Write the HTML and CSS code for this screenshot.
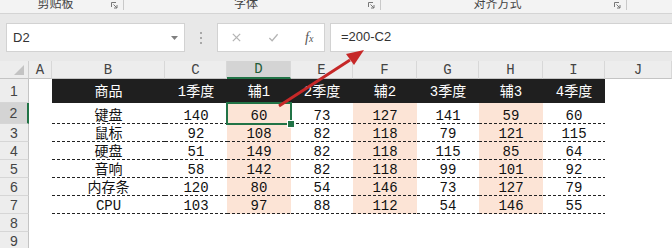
FILE: index.html
```html
<!DOCTYPE html>
<html lang="zh-CN">
<head>
    <meta charset="UTF-8">
    <title>辅助列 - Excel</title>
    <link rel="stylesheet" href="styles.css">
</head>
<body>
    <div class="ribbon">
        <div class="group g-clip"><span class="group-label">剪贴板</span><span class="launcher"><svg viewBox="0 0 7 7"><path d="M0.5 5V0.5H5M2.5 2.5l3.5 3.5M6 3v3H3"/></svg></span></div>
        <div class="group g-font"><span class="group-label">字体</span><span class="launcher"><svg viewBox="0 0 7 7"><path d="M0.5 5V0.5H5M2.5 2.5l3.5 3.5M6 3v3H3"/></svg></span></div>
        <div class="group g-align"><span class="group-label">对齐方式</span><span class="launcher"><svg viewBox="0 0 7 7"><path d="M0.5 5V0.5H5M2.5 2.5l3.5 3.5M6 3v3H3"/></svg></span></div>
    </div>

    <div class="formula-bar">
        <div class="name-box">
            <span>D2</span>
            <svg class="caret" viewBox="0 0 7 4"><path d="M0 0h7L3.5 4z"/></svg>
        </div>
        <div class="grip"><i></i><i></i><i></i></div>
        <div class="fn-buttons">
            <svg class="btn-icon" viewBox="0 0 12 12"><path d="M2 2l8 8M10 2l-8 8"/></svg>
            <svg class="btn-icon" viewBox="0 0 12 12"><path d="M1.5 6.5l3 3 6-7"/></svg>
            <span class="fx">f<small>x</small></span>
        </div>
        <div class="formula-input">=200-C2</div>
    </div>

    <div class="sheet">
        <div class="row head">
            <div class="corner"><svg viewBox="0 0 10 10"><path d="M10 0v10H0z"/></svg></div>
            <div class="ch">A</div><div class="ch">B</div><div class="ch">C</div><div class="ch sel">D</div><div class="ch">E</div>
            <div class="ch">F</div><div class="ch">G</div><div class="ch">H</div><div class="ch">I</div><div class="ch">J</div>
        </div>
        <div class="row r-title">
            <div class="rh">1</div><div class="cell"></div>
            <div class="cell title">商品</div><div class="cell title">1季度</div><div class="cell title">辅1</div><div class="cell title">2季度</div>
            <div class="cell title">辅2</div><div class="cell title">3季度</div><div class="cell title">辅3</div><div class="cell title">4季度</div>
            <div class="cell"></div>
        </div>
        <div class="row r-first">
            <div class="rh sel">2</div><div class="cell"></div>
            <div class="cell data">键盘</div><div class="cell data">140</div><div class="cell data aux active">60</div><div class="cell data">73</div>
            <div class="cell data aux">127</div><div class="cell data">141</div><div class="cell data aux">59</div><div class="cell data">60</div>
            <div class="cell"></div>
        </div>
        <div class="row">
            <div class="rh">3</div><div class="cell"></div>
            <div class="cell data">鼠标</div><div class="cell data">92</div><div class="cell data aux">108</div><div class="cell data">82</div>
            <div class="cell data aux">118</div><div class="cell data">79</div><div class="cell data aux">121</div><div class="cell data">115</div>
            <div class="cell"></div>
        </div>
        <div class="row">
            <div class="rh">4</div><div class="cell"></div>
            <div class="cell data">硬盘</div><div class="cell data">51</div><div class="cell data aux">149</div><div class="cell data">82</div>
            <div class="cell data aux">118</div><div class="cell data">115</div><div class="cell data aux">85</div><div class="cell data">64</div>
            <div class="cell"></div>
        </div>
        <div class="row">
            <div class="rh">5</div><div class="cell"></div>
            <div class="cell data">音响</div><div class="cell data">58</div><div class="cell data aux">142</div><div class="cell data">82</div>
            <div class="cell data aux">118</div><div class="cell data">99</div><div class="cell data aux">101</div><div class="cell data">92</div>
            <div class="cell"></div>
        </div>
        <div class="row">
            <div class="rh">6</div><div class="cell"></div>
            <div class="cell data">内存条</div><div class="cell data">120</div><div class="cell data aux">80</div><div class="cell data">54</div>
            <div class="cell data aux">146</div><div class="cell data">73</div><div class="cell data aux">127</div><div class="cell data">79</div>
            <div class="cell"></div>
        </div>
        <div class="row">
            <div class="rh">7</div><div class="cell"></div>
            <div class="cell data">CPU</div><div class="cell data">103</div><div class="cell data aux">97</div><div class="cell data">88</div>
            <div class="cell data aux">112</div><div class="cell data">54</div><div class="cell data aux">146</div><div class="cell data">55</div>
            <div class="cell"></div>
        </div>
        <div class="row">
            <div class="rh">8</div>
        </div>
        <div class="row">
            <div class="rh">9</div>
        </div>
    </div>

    <!-- 红色箭头：从 D2 指向编辑栏 -->
    <svg class="arrow" viewBox="0 0 672 248">
        <path class="arrow-line" d="M279 106L350 60"/>
        <path class="arrow-head" d="M364 50L354 65L346 54z"/>
    </svg>
</body>
</html>
```

FILE: styles.css
```css
* {
    margin: 0;
    padding: 0;
    box-sizing: border-box;
}

body {
    width: 672px;
    height: 248px;
    overflow: hidden;
    position: relative;
    background: #e8e8e8;
    font-family: "Liberation Sans", "Noto Sans CJK SC", sans-serif;
    color: #222;
}

/* 功能区底部 */
.ribbon {
    display: flex;
    height: 14px;
    background: #f3f3f3;
    border-bottom: 1px solid #d4d4d4;
    overflow: hidden;
}

.group {
    display: flex;
    align-items: flex-start;
    height: 10px;
    border-right: 1px solid #c9c9c9;
}

.g-clip { width: 124px; }
.g-font { width: 257px; }
.g-align { width: 246px; }

.group-label {
    flex: 1;
    text-align: center;
    font-family: "Noto Sans CJK SC", sans-serif;
    font-size: 12px;
    line-height: 12px;
    margin-top: -3px;
    color: #444;
}

.launcher {
    width: 7px;
    height: 7px;
    margin: 2px 5px 0 0;
}

.launcher svg {
    display: block;
    width: 7px;
    height: 7px;
    fill: none;
    stroke: #777;
    stroke-width: 1;
}

/* 编辑栏 */
.formula-bar {
    display: flex;
    align-items: stretch;
    height: 47px;
    padding: 9px 0 8px;
}

.name-box,
.fn-buttons,
.formula-input {
    background: #fff;
    border: 1px solid #d2d2d2;
    height: 29px;
}

.name-box {
    display: flex;
    align-items: center;
    justify-content: space-between;
    width: 179px;
    margin-left: 6px;
    padding: 0 6px 0 6px;
    font-size: 13px;
    color: #333;
}

.caret {
    width: 7px;
    height: 4px;
    fill: #808080;
}

.grip {
    display: flex;
    flex-direction: column;
    justify-content: center;
    gap: 3px;
    width: 32px;
    align-items: center;
}

.grip i {
    display: block;
    width: 2px;
    height: 2px;
    background: #a8a8a8;
}

.fn-buttons {
    display: flex;
    align-items: center;
    width: 108px;
    padding-left: 13px;
    gap: 26px;
}

.btn-icon {
    width: 11px;
    height: 11px;
    fill: none;
    stroke: #b4b4b4;
    stroke-width: 1.4;
}

.fx {
    font-family: "Liberation Serif", serif;
    font-style: italic;
    font-size: 14px;
    color: #555;
}

.fx small {
    font-size: 10px;
}

.formula-input {
    flex: 1;
    margin-left: 5px;
    border-right: none;
    padding: 5px 0 0 10px;
    font-size: 13px;
    color: #333;
}

/* 工作表 */
.sheet {
    background: #fff;
}

.row {
    display: grid;
    grid-template-columns: 29px 23px 113px 62px 64px 62px 64px 62px 64px 62px 1fr;
    height: 18px;
}

.row.r-title { height: 24px; }
.row.r-first { height: 21px; }

.corner,
.ch,
.rh {
    background: #ededed;
    color: #444;
}

.corner {
    display: flex;
    align-items: flex-end;
    justify-content: flex-end;
    padding: 0 4px 3px 0;
    border-right: 1px solid #cfcfcf;
    border-bottom: 1px solid #c4c4c4;
}

.corner svg {
    width: 10px;
    height: 10px;
    fill: #c3c3c3;
}

.ch {
    display: flex;
    align-items: center;
    justify-content: center;
    font-family: "Liberation Mono", monospace;
    font-size: 14px;
    border-right: 1px solid #d8d8d8;
    border-bottom: 1px solid #c4c4c4;
}

.ch.sel {
    background: #d4d4d4;
    color: #1e5c38;
    border-bottom: 2px solid #217346;
}

.rh {
    display: flex;
    align-items: center;
    justify-content: center;
    font-size: 14px;
    border-right: 1px solid #c4c4c4;
    border-bottom: 1px solid #d6d6d6;
}

.rh.sel {
    background: #d4d4d4;
    border-right: 2px solid #217346;
}

.cell {
    display: flex;
    align-items: flex-end;
    justify-content: center;
    font-family: "Liberation Mono", "Noto Sans CJK SC", monospace;
    font-size: 14px;
    line-height: 14px;
    color: #111;
    white-space: nowrap;
}

.cell.title {
    background: #1f1f1f;
    color: #fff;
    padding-bottom: 4px;
}

.cell.data {
    padding-bottom: 1px;
    background-image: linear-gradient(to right, #222 0 3px, transparent 3px);
    background-size: 5px 1px;
    background-repeat: repeat-x;
    background-position: left bottom;
}

.cell.aux {
    background-color: #fce4d6;
}

.cell.active {
    position: relative;
    outline: 2px solid #217346;
    outline-offset: -1px;
}

.cell.active::after {
    content: "";
    position: absolute;
    right: -4px;
    bottom: -4px;
    width: 6px;
    height: 6px;
    background: #217346;
    border: 1px solid #fff;
}

.arrow {
    position: absolute;
    left: 0;
    top: 0;
    width: 672px;
    height: 248px;
    pointer-events: none;
}

.arrow-line {
    fill: none;
    stroke: #c62828;
    stroke-width: 3;
}

.arrow-head {
    fill: #c62828;
}
```
